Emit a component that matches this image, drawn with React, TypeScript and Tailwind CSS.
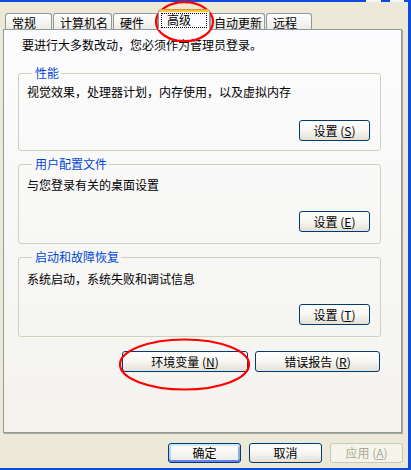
import React from "react";

const FONT = "font-['Noto_Sans_CJK_SC','Noto_Sans',sans-serif]";

function XPButton({
  children,
  w,
  h = "h-[21px]",
  variant = "normal",
}: {
  children: React.ReactNode;
  w: string;
  h?: string;
  variant?: "normal" | "default" | "disabled";
}) {
  const base = `${w} ${h} flex items-center justify-center rounded-[3px] border text-[12px] leading-[14px] whitespace-nowrap`;
  if (variant === "disabled") {
    return (
      <div className={`${base} border-[#C9C7BA] bg-[#F5F4EA] text-[#ACA899]`}>{children}</div>
    );
  }
  if (variant === "default") {
    return (
      <div
        className={`${base} border-[#003C74] bg-linear-to-b from-white to-[#ECEBE6] text-black shadow-[inset_0_2px_0_#CEE7FF,inset_0_-2px_0_#6982EE,inset_2px_0_0_#B8D2F8,inset_-2px_0_0_#89ADE4]`}
      >
        {children}
      </div>
    );
  }
  return (
    <div
      className={`${base} border-[#003C74] bg-linear-to-b from-white via-[#F7F6F2] to-[#E3E0D6] text-black`}
    >
      {children}
    </div>
  );
}

function Tab({ label, w, pl = "pl-[6px]" }: { label: string; w: string; pl?: string }) {
  return (
    <div
      className={`${w} ${pl} h-[16px] rounded-t-[3px] border border-b-0 border-[#919B9C] bg-linear-to-b from-white to-[#ECEBE6] pt-[2px] text-[12px] leading-[14px] whitespace-nowrap`}
    >
      {label}
    </div>
  );
}

function SelectedTab() {
  return (
    <div className="relative z-10 -mb-[1px] -mx-[1px] flex h-[21px] w-[52px] flex-col rounded-t-[3px] border-x border-[#919B9C] bg-[#FCFCFE]">
      <div className="h-[3px] rounded-t-[3px] border-t border-[#E68B2C] bg-[#FFC73C]" />
      <div className="mx-[2px] mt-[1px] h-[15px] border border-dotted border-black pl-[5px] text-[12px] leading-[12px]">
        高级
      </div>
    </div>
  );
}

function Group({
  title,
  text,
  acc,
  mt,
  textMt,
  btnMt,
  pb,
}: {
  title: string;
  text: string;
  acc: string;
  mt: string;
  textMt: string;
  btnMt: string;
  pb: string;
}) {
  return (
    <fieldset
      className={`${mt} ml-[14px] w-[363px] rounded-[3px] border border-[#D0D0BF] pl-[8px] pr-[10px] ${pb}`}
    >
      <legend className="ml-[5px] pl-[3px] pr-[2px] text-[12px] leading-[14px] text-[#0046D5]">
        {title}
      </legend>
      <div className={`${textMt} text-[12px] leading-[16px] whitespace-nowrap`}>{text}</div>
      <div className={`${btnMt} flex justify-end`}>
        <XPButton w="w-[71px]">
          设置 (<span className="underline">{acc}</span>)
        </XPButton>
      </div>
    </fieldset>
  );
}

export default function App() {
  return (
    <div className={`relative flex h-[470px] w-[411px] flex-col overflow-hidden bg-[#0B4EDB] text-black ${FONT}`}>
      {/* title bar remnant */}
      <div className="flex h-[2px] w-[411px]">
        <div className="w-[366px]" />
        <div className="w-[15px] bg-[#F4F6FC]" />
        <div className="w-[9px]" />
        <div className="w-[14px] bg-[#F4F6FC]" />
      </div>
      <div className="flex h-[466px]">
        <div className="flex h-[466px] w-[408px] flex-col bg-[#ECE9D8]">
          {/* tabs */}
          <div className="mt-[7px] flex h-[20px] items-end pl-[5px]">
            <div className="mr-[1px]">
              <Tab label="常规" w="w-[47px]" />
            </div>
            <div className="mr-[1px]">
              <Tab label="计算机名" w="w-[59px]" />
            </div>
            <div className="mr-[1px]">
              <Tab label="硬件" w="w-[45px]" />
            </div>
            <SelectedTab />
            <div className="ml-[1px] mr-[1px]">
              <Tab label="自动更新" w="w-[55px]" pl="pl-[3px]" />
            </div>
            <div>
              <Tab label="远程" w="w-[46px]" />
            </div>
          </div>
          {/* panel */}
          <div className="ml-[3px] flex h-[404px] w-[399px] flex-col border border-[#919B9C] bg-linear-to-b from-[#FCFCFE] to-[#F4F3EE] shadow-[1px_1px_0_#ACA899]">
            <div className="mt-[7px] pl-[18px] text-[12px] leading-[16px] whitespace-nowrap">
              要进行大多数改动，您必须作为管理员登录。
            </div>
            <Group
              title="性能"
              text="视觉效果，处理器计划，内存使用，以及虚拟内存"
              acc="S"
              mt="mt-[13px]"
              textMt="mt-[4px]"
              btnMt="mt-[20px]"
              pb="pb-[9px]"
            />
            <Group
              title="用户配置文件"
              text="与您登录有关的桌面设置"
              acc="E"
              mt="mt-[6px]"
              textMt="mt-[6px]"
              btnMt="mt-[18px]"
              pb="pb-[11px]"
            />
            <Group
              title="启动和故障恢复"
              text="系统启动，系统失败和调试信息"
              acc="T"
              mt="mt-[6px]"
              textMt="mt-[7px]"
              btnMt="mt-[17px]"
              pb="pb-[11px]"
            />
            <div className="ml-[14px] mt-[14px] flex w-[363px] justify-end gap-[7px] pr-[1px]">
              <XPButton w="w-[126px]">
                环境变量 (<span className="underline">N</span>)
              </XPButton>
              <XPButton w="w-[125px]">
                错误报告 (<span className="underline">R</span>)
              </XPButton>
            </div>
          </div>
          {/* dialog buttons */}
          <div className="mt-[10px] flex justify-end gap-[8px] pr-[5px]">
            <XPButton w="w-[73px]" h="h-[20px]" variant="default">
              确定
            </XPButton>
            <XPButton w="w-[73px]" h="h-[20px]">
              取消
            </XPButton>
            <XPButton w="w-[73px]" h="h-[20px]" variant="disabled">
              应用 (<span className="underline">A</span>)
            </XPButton>
          </div>
        </div>
      </div>
      {/* red annotation ellipses */}
      <svg
        className="pointer-events-none absolute left-0 top-0"
        width="411"
        height="470"
        viewBox="0 0 411 470"
      >
        <ellipse cx="184.5" cy="21.7" rx="28.5" ry="19.5" fill="none" stroke="#FF0000" strokeWidth="2.2" />
        <ellipse cx="184.5" cy="364.5" rx="64.5" ry="25" fill="none" stroke="#FF0000" strokeWidth="2.2" />
      </svg>
    </div>
  );
}
